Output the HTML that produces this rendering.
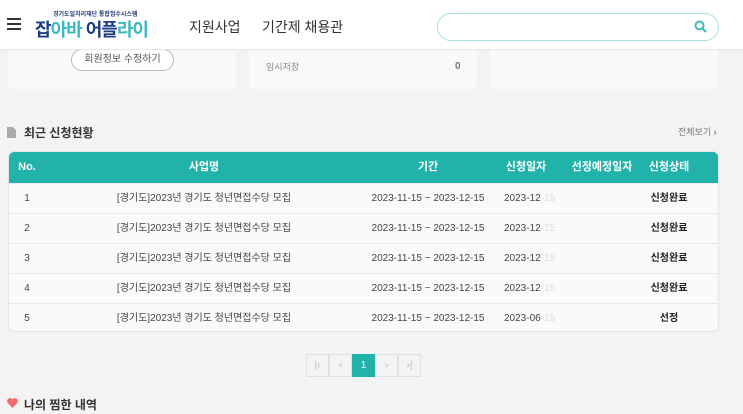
<!DOCTYPE html>
<html><head><meta charset="utf-8"><style>
*{margin:0;padding:0;box-sizing:border-box}
body{width:743px;height:414px;overflow:hidden;background:#f3f3f3;font-family:"Liberation Sans","Noto Sans CJK KR",sans-serif;position:relative;color:#333}
.hdr{position:absolute;left:0;top:0;width:743px;height:50px;background:#fff;border-bottom:1px solid #e6e6e6;z-index:2}
.card{position:absolute;top:40px;height:49px;background:#f9f9f9;border-radius:6px}
.abs{position:absolute;white-space:nowrap}
.tbl{position:absolute;left:8px;top:151px;width:711px;height:181px;background:#fafafa;border:1px solid #e5e5e5;border-radius:6px;overflow:hidden}
.th{position:absolute;left:0;top:0;width:100%;height:31px;background:#21b3a9}
.th span{position:absolute;top:0;height:31px;line-height:31px;color:#fff;font-size:11px;font-weight:bold;text-align:center;white-space:nowrap}
.row{position:absolute;left:0;width:100%;height:30px;border-top:1px solid #e8e8e8;font-size:10px;color:#444;white-space:nowrap}
.row span{position:absolute;top:0;height:29px;line-height:29px;text-align:center;white-space:nowrap}
.c1{left:0;width:36px}.c2{left:95px;width:200px}.c3{left:349px;width:140px}.c4{left:495px;width:60px;text-align:left!important}.c5{left:560px;width:60px}.c6{left:630px;width:60px;font-weight:bold;color:#222}
.pg{position:absolute;top:354px;width:23px;height:23px;border:1px solid #e0e0e0;background:#f3f3f3;color:#bbb;font-size:10px;text-align:center;line-height:21px}
</style></head><body>
<div class="hdr">
 <div class="abs" style="left:7px;top:18px;width:14px;height:2px;background:#333;box-shadow:0 5px 0 #333,0 10px 0 #333"></div>
 <div class="abs" style="left:53px;top:9px;font-size:6px;font-weight:bold;color:#2a3f7a">경기도일자리재단 통합접수시스템</div>
 <div class="abs" style="left:35px;top:16px;font-size:18px;font-weight:bold;letter-spacing:-1px"><span style="color:#1f3c88">잡</span><span style="color:#3bb8c0">아바 </span><span style="color:#1f3c88">어플</span><span style="color:#3bb8c0">라이</span></div>
 <div class="abs" style="left:189px;top:17px;font-size:14px;color:#333">지원사업</div>
 <div class="abs" style="left:262px;top:17px;font-size:14px;color:#333">기간제 채용관</div>
 <div class="abs" style="left:437px;top:13px;width:282px;height:28px;border:1px solid #a7e0de;border-radius:14px"></div>
 <svg class="abs" style="left:694px;top:20px" width="13" height="13" viewBox="0 0 13 13"><circle cx="5.5" cy="5.5" r="4" fill="none" stroke="#3cbcb4" stroke-width="2"/><path d="M8.5 8.5L12 12" stroke="#3cbcb4" stroke-width="2"/></svg>
</div>
<div class="card" style="left:8px;width:228px"></div>
<div class="card" style="left:249px;width:228px"></div>
<div class="card" style="left:490px;width:228px"></div>
<div class="abs" style="left:71px;top:49px;width:103px;height:22px;border:1px solid #bbb;border-radius:11px;background:#fff;font-size:10px;color:#555;text-align:center;line-height:20px">회원정보 수정하기</div>
<div class="abs" style="left:266px;top:60px;font-size:9px;color:#888">임시저장</div>
<div class="abs" style="left:455px;top:61px;font-size:10px;color:#777;font-weight:bold">0</div>
<svg class="abs" style="left:7px;top:127px" width="9" height="11" viewBox="0 0 9 11"><path d="M0 0H6L9 3V11H0Z" fill="#aaa"/></svg>
<div class="abs" style="left:24px;top:124px;font-size:12px;font-weight:bold;color:#333">최근 신청현황</div>
<div class="abs" style="left:678px;top:125px;font-size:9px;color:#777">전체보기 <b>›</b></div>
<div class="tbl">
 <div class="th"><span style="left:0;width:36px">No.</span><span style="left:95px;width:200px">사업명</span><span style="left:349px;width:140px">기간</span><span style="left:487px;width:60px">신청일자</span><span style="left:553px;width:80px">선정예정일자</span><span style="left:630px;width:60px">신청상태</span></div>
 <div class="row" style="top:31px"><span class="c1">1</span><span class="c2">[경기도]2023년 경기도 청년면접수당 모집</span><span class="c3">2023-11-15 ~ 2023-12-15</span><span class="c4">2023-12<span style="position:static;color:#ddd">-15</span></span><span class="c6">신청완료</span></div>
 <div class="row" style="top:61px"><span class="c1">2</span><span class="c2">[경기도]2023년 경기도 청년면접수당 모집</span><span class="c3">2023-11-15 ~ 2023-12-15</span><span class="c4">2023-12<span style="position:static;color:#ddd">-15</span></span><span class="c6">신청완료</span></div>
 <div class="row" style="top:91px"><span class="c1">3</span><span class="c2">[경기도]2023년 경기도 청년면접수당 모집</span><span class="c3">2023-11-15 ~ 2023-12-15</span><span class="c4">2023-12<span style="position:static;color:#ddd">-15</span></span><span class="c6">신청완료</span></div>
 <div class="row" style="top:121px"><span class="c1">4</span><span class="c2">[경기도]2023년 경기도 청년면접수당 모집</span><span class="c3">2023-11-15 ~ 2023-12-15</span><span class="c4">2023-12<span style="position:static;color:#ddd">-15</span></span><span class="c6">신청완료</span></div>
 <div class="row" style="top:151px"><span class="c1">5</span><span class="c2">[경기도]2023년 경기도 청년면접수당 모집</span><span class="c3">2023-11-15 ~ 2023-12-15</span><span class="c4">2023-06<span style="position:static;color:#ddd">-15</span></span><span class="c6">선정</span></div>
</div>
<div class="pg" style="left:306px">|‹</div>
<div class="pg" style="left:329px">‹</div>
<div class="pg" style="left:352px;background:#21b3a9;border-color:#21b3a9;color:#fff">1</div>
<div class="pg" style="left:375px">›</div>
<div class="pg" style="left:398px">›|</div>
<svg class="abs" style="left:7px;top:398px" width="11" height="10" viewBox="0 0 11 10"><path d="M5.5 10L0.8 5A2.7 2.7 0 0 1 5.5 1.3A2.7 2.7 0 0 1 10.2 5Z" fill="#f06a6a"/></svg>
<div class="abs" style="left:24px;top:396px;font-size:12px;font-weight:bold;color:#333">나의 찜한 내역</div>
</body></html>
